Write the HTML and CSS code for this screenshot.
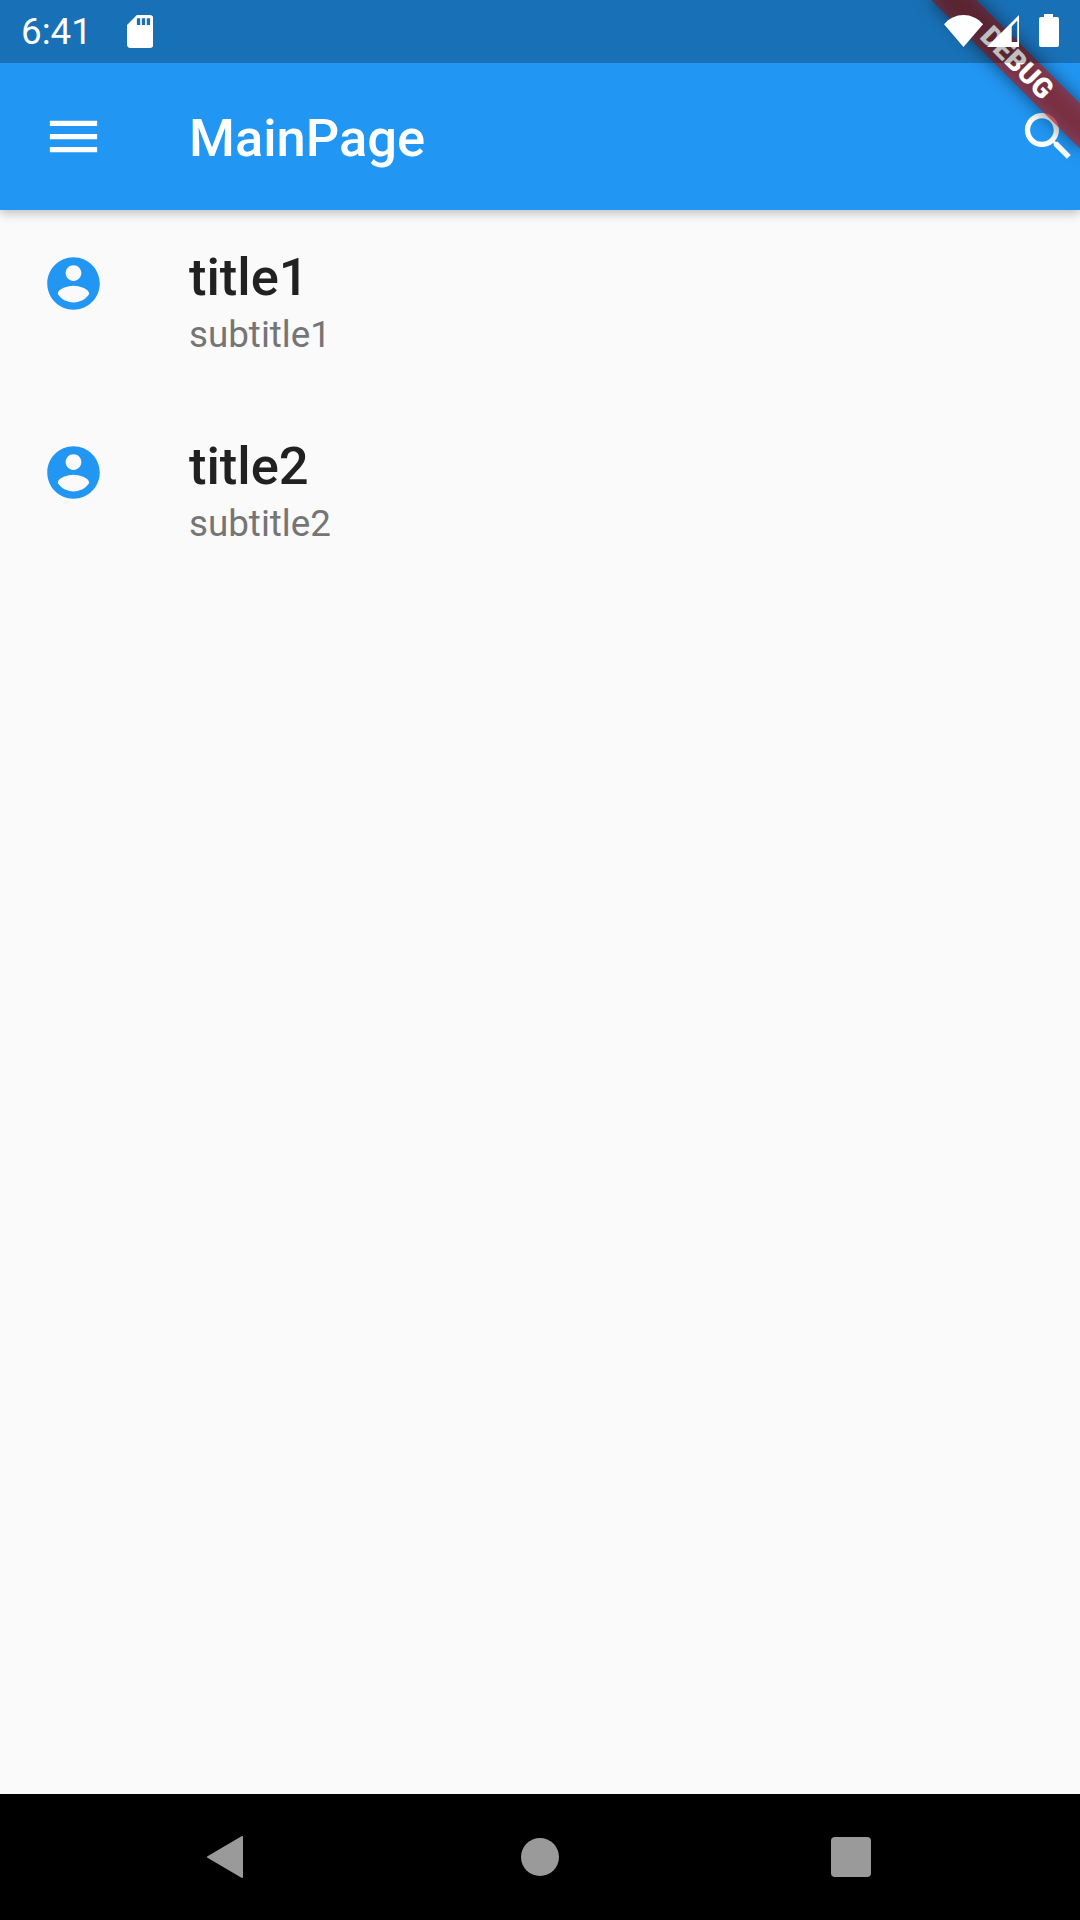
FILE: index.html
```html
<!DOCTYPE html>
<html lang="en">
<head>
    <meta charset="UTF-8">
    <title>MainPage</title>
    <link rel="stylesheet" href="styles.css">
</head>
<body>
    <div class="screen">
        <header class="top-area">
            <div class="status-bar">
                <span class="clock">6:41</span>
                <svg class="sd-icon" viewBox="4 2 16 20"><path fill="#fff" d="M18 2h-8L4.020 8 4 20c0 1.100.9 2 2 2h12c1.100 0 2-.9 2-2V4c0-1.100-.9-2-2-2zm-6 6h-2V4h2v4zm3 0h-2V4h2v4zm3 0h-2V4h2v4z"/></svg>
                <div class="status-right">
                    <svg class="wifi-icon" viewBox="0 0 39 33" preserveAspectRatio="none"><path fill="#fff" d="M0 9.500C5 3.500 12 0 19.500 0S34 3.500 39 9.500L19.500 33z"/></svg>
                    <svg class="signal-icon" viewBox="0 0 32 32"><path fill="#fff" fill-rule="evenodd" d="M32 0V32H0zM30.300 5.500L24.700 11.500V27H30.300z"/></svg>
                    <svg class="battery-icon" viewBox="0 0 20 33"><path fill="#fff" d="M5 0H14V3H18a2 2 0 0 1 2 2V31a2 2 0 0 1-2 2H2a2 2 0 0 1-2-2V5a2 2 0 0 1 2-2H5z"/></svg>
                </div>
            </div>

            <div class="app-bar">
                <svg class="bar-icon" viewBox="0 0 24 24"><path fill="#fff" d="M3 18h18v-2H3v2zm0-5h18v-2H3v2zm0-7v2h18V6H3z"/></svg>
                <h1 class="bar-title">MainPage</h1>
                <svg class="bar-icon search-icon" viewBox="0 0 24 24"><path fill="#fff" d="M15.500 14h-.79l-.28-.27C15.410 12.590 16 11.110 16 9.500 16 5.910 13.090 3 9.500 3S3 5.910 3 9.500 5.910 16 9.500 16c1.610 0 3.090-.59 4.230-1.570l.27.28v.79l5 4.990L20.490 19l-4.990-5zm-6 0C7.010 14 5 11.990 5 9.500S7.010 5 9.500 5 14 7.010 14 9.500 11.990 14 9.500 14z"/></svg>
            </div>
        </header>

        <main class="list">
            <div class="list-item">
                <svg class="avatar" viewBox="0 0 24 24"><path fill="#2196f3" d="M12 2C6.480 2 2 6.480 2 12s4.480 10 10 10 10-4.480 10-10S17.520 2 12 2zm0 3c1.660 0 3 1.340 3 3s-1.340 3-3 3-3-1.340-3-3 1.340-3 3-3zm0 14.200c-2.500 0-4.710-1.280-6-3.220.03-1.990 4-3.080 6-3.080 1.990 0 5.970 1.090 6 3.080-1.290 1.940-3.500 3.220-6 3.220z"/></svg>
                <div class="item-text">
                    <div class="item-title">title1</div>
                    <div class="item-subtitle">subtitle1</div>
                </div>
            </div>
            <div class="list-item">
                <svg class="avatar" viewBox="0 0 24 24"><path fill="#2196f3" d="M12 2C6.480 2 2 6.480 2 12s4.480 10 10 10 10-4.480 10-10S17.520 2 12 2zm0 3c1.660 0 3 1.340 3 3s-1.340 3-3 3-3-1.340-3-3 1.340-3 3-3zm0 14.200c-2.500 0-4.710-1.280-6-3.220.03-1.990 4-3.080 6-3.080 1.990 0 5.970 1.090 6 3.080-1.290 1.940-3.500 3.220-6 3.220z"/></svg>
                <div class="item-text">
                    <div class="item-title">title2</div>
                    <div class="item-subtitle">subtitle2</div>
                </div>
            </div>
        </main>

        <footer class="nav-bar">
            <svg class="nav-back" viewBox="0 0 36 42"><path fill="#9a9a9a" stroke="#9a9a9a" stroke-width="2" stroke-linejoin="round" d="M35 1V41L1 21z"/></svg>
            <div class="nav-home"></div>
            <div class="nav-recent"></div>
        </footer>

        <div class="banner">
            <div class="banner-shadow"></div>
            <div class="banner-strip">DEBUG</div>
        </div>
    </div>
</body>
</html>
```

FILE: styles.css
```css
* {
    box-sizing: border-box;
}

body {
    margin: 0;
    font-family: Roboto, "Liberation Sans", sans-serif;
    background: #fafafa;
}

.screen {
    position: relative;
    width: 1080px;
    height: 1920px;
    display: flex;
    flex-direction: column;
    overflow: hidden;
}

.top-area {
    flex: none;
    background: #2196f3;
    box-shadow: 0 3px 10px rgba(0, 0, 0, 0.25);
}

/* the status bar is a see-through scrim, it also darkens the debug banner */
.status-bar {
    position: relative;
    z-index: 3;
    height: 63px;
    display: flex;
    align-items: center;
    padding: 0 21px;
    background: rgba(0, 0, 0, 0.25);
    color: #fff;
}

.clock {
    font-size: 36.75px;
    line-height: 63px;
}

.sd-icon {
    width: 26.4px;
    height: 33px;
    margin-left: 35px;
}

.status-right {
    margin-left: auto;
    margin-top: -2px;
    display: flex;
    align-items: center;
}

.wifi-icon {
    width: 39px;
    height: 32px;
}

.signal-icon {
    width: 32px;
    height: 32px;
    margin-left: 4px;
}

.battery-icon {
    width: 20px;
    height: 33px;
    margin-left: 20px;
}

.app-bar {
    height: 147px;
    display: flex;
    align-items: center;
    padding-left: 42px;
}

.bar-icon {
    width: 63px;
    height: 63px;
    flex: none;
}

.bar-title {
    margin: 2px 0 0 84px;
    font-size: 52.5px;
    font-weight: 500;
    color: #fff;
}

.search-icon {
    margin-left: auto;
}

.list {
    flex: 1;
}

.list-item {
    height: 189px;
    display: flex;
    padding: 42px 0 0 42px;
}

.avatar {
    width: 63px;
    height: 63px;
    flex: none;
}

.item-text {
    margin-left: 84px;
    margin-top: -6px;
}

.item-title {
    font-size: 52.5px;
    font-weight: 500;
    line-height: 62px;
    color: #212121;
}

.item-subtitle {
    font-size: 36.75px;
    line-height: 43px;
    margin-top: 5px;
    color: #757575;
}

.nav-bar {
    height: 126px;
    flex: none;
    position: relative;
    display: flex;
    align-items: center;
    background: #000;
    padding-left: 207px;
}

.nav-back {
    width: 36px;
    height: 42px;
}

.nav-home {
    width: 38px;
    height: 38px;
    margin-left: 278px;
    border-radius: 50%;
    background: #9a9a9a;
}

.nav-recent {
    width: 40px;
    height: 40px;
    margin-left: 272px;
    border-radius: 4px;
    background: #9a9a9a;
}

.banner {
    position: absolute;
    z-index: 2;
    top: 0;
    right: 0;
    width: 210px;
    height: 210px;
    overflow: hidden;
}

.banner-shadow,
.banner-strip {
    position: absolute;
    left: 0;
    top: 47.25px;
    width: 210px;
    height: 31.5px;
    transform: translateX(42px) rotate(45deg);
}

.banner-shadow {
    background: rgba(0, 0, 0, 0.5);
    filter: blur(9px);
}

.banner-strip {
    background: rgba(183, 28, 28, 0.627);
    color: #fff;
    font-size: 28px;
    font-weight: 900;
    line-height: 31.5px;
    text-align: center;
}
```
